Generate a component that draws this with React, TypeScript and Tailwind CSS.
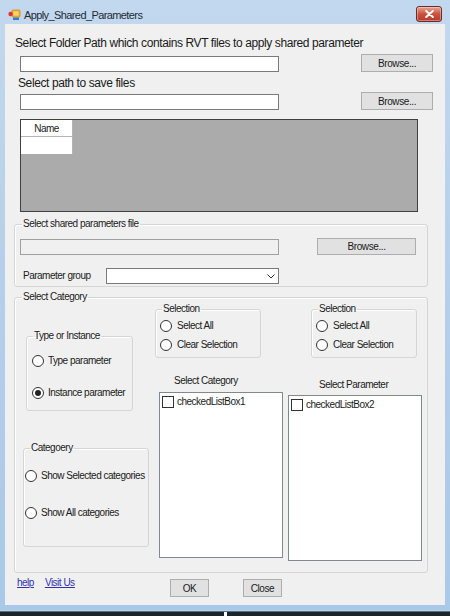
import type { ReactNode } from "react";

const FONT = { fontFamily: '"Liberation Sans", Arial, sans-serif' };

function GroupBox({ title, className, legendClass, children }: { title: string; className: string; legendClass?: string; children?: ReactNode }) {
    return (
        <fieldset className={`border border-[#d5d5d5] rounded-[3px] shadow-[inset_1px_1px_0_#ffffff] ${className}`}>
            <legend className={`px-[1px] text-[10px] leading-[12px] tracking-[-0.5px] text-[#1a1a1a] ${legendClass ?? "ml-[6px]"}`}>{title}</legend>
            {children}
        </fieldset>
    );
}

function Radio({ label, checked, className, gap = "ml-[4px]" }: { label: string; checked?: boolean; className?: string; gap?: string }) {
    return (
        <div className={`flex items-center h-[14px] ${className ?? ""}`}>
            <span className="w-[12px] h-[12px] rounded-full border border-[#333] bg-white flex items-center justify-center shrink-0">
                {checked && <span className="w-[6px] h-[6px] rounded-full bg-[#222]" />}
            </span>
            <span className={`${gap} text-[10px] leading-[12px] tracking-[-0.5px] text-[#1a1a1a] whitespace-nowrap`}>{label}</span>
        </div>
    );
}

function Button({ label, className }: { label: string; className: string }) {
    return (
        <button type="button" className={`bg-[#e1e1e1] border border-[#adadad] text-[10px] tracking-[-0.4px] text-[#1a1a1a] flex items-center justify-center shrink-0 ${className}`}>
            {label}
        </button>
    );
}

function TextBox({ className }: { className: string }) {
    return <div className={`border border-[#7a7a7a] shrink-0 ${className}`} />;
}

function CheckedList({ label, className }: { label: string; className: string }) {
    return (
        <div className={`bg-white border border-[#828790] shrink-0 pt-[3px] pl-[2px] ${className}`}>
            <div className="flex items-center">
                <span className="w-[12px] h-[12px] border border-[#333] bg-white shrink-0" />
                <span className="ml-[3px] text-[10px] leading-[12px] tracking-[-0.5px] text-[#1a1a1a]">{label}</span>
            </div>
        </div>
    );
}

function AppIcon() {
    return (
        <svg width="13" height="12" viewBox="0 0 13 12" className="shrink-0">
            <rect x="4" y="1" width="8" height="7" rx="1" fill="#f2b233" stroke="#c98a1d" strokeWidth="0.8" />
            <rect x="5.5" y="2.5" width="5" height="4" fill="#f8d46a" />
            <circle cx="2.6" cy="5" r="2.2" fill="#d8363a" />
            <rect x="5" y="8.5" width="6" height="2.5" fill="#3b78c9" />
        </svg>
    );
}

export default function App() {
    return (
        <div className="w-[450px] h-[616px] flex flex-col bg-[#1d2b31] overflow-hidden" style={FONT}>
            {/* window */}
            <div className="w-[450px] h-[611px] flex flex-col bg-gradient-to-b from-[#c2d8ee] via-[#b4cfea] to-[#a9c9e8] border-b border-[#b9d3ec]">
                {/* title bar */}
                <div className="h-[24px] flex items-start shrink-0">
                    <div className="ml-[8px] mt-[9px]"><AppIcon /></div>
                    <span className="ml-[3px] mt-[8px] text-[11px] leading-[14px] tracking-[-0.6px] text-[#1e2a36]">Apply_Shared_Parameters</span>
                    <div className="ml-auto mr-[8px] mt-[6px] w-[26px] h-[16px] rounded-[3px] border border-[#6e2a26] bg-gradient-to-b from-[#e8a393] via-[#c9523f] to-[#b73a2a] flex items-center justify-center shadow-[inset_0_0_0_1px_rgba(255,255,255,0.35)]">
                        <svg width="9" height="8" viewBox="0 0 9 8">
                            <path d="M1.2 1 L7.8 7 M7.8 1 L1.2 7" stroke="#ffffff" strokeWidth="2" strokeLinecap="round" />
                        </svg>
                    </div>
                </div>

                {/* client area */}
                <div className="mx-[5px] h-[581px] bg-[#f0f0f0] flex flex-col shrink-0">
                    <div className="mt-[12px] ml-[10px] text-[12px] leading-[14px] tracking-[-0.4px] text-[#1a1a1a]">
                        Select Folder Path which contains RVT files to apply shared parameter
                    </div>
                    <div className="mt-[4px] flex items-end">
                        <TextBox className="ml-[15px] w-[259px] h-[16px] bg-white" />
                        <Button label="Browse..." className="ml-[82px] w-[72px] h-[18px]" />
                    </div>
                    <div className="mt-[4px] ml-[13px] text-[12px] leading-[14px] tracking-[-0.4px] text-[#1a1a1a]">
                        Select path to save files
                    </div>
                    <div className="mt-[2px] flex items-end">
                        <TextBox className="ml-[15px] w-[259px] h-[16px] bg-white" />
                        <Button label="Browse..." className="ml-[82px] w-[72px] h-[18px]" />
                    </div>

                    {/* data grid */}
                    <div className="mt-[9px] ml-[15px] w-[398px] h-[93px] bg-[#ababab] border border-[#404040] shrink-0">
                        <div className="w-[52px] h-[17px] bg-white border-r border-b border-[#b5b5b5] flex items-center justify-center text-[10px] tracking-[-0.5px] text-[#1a1a1a]">Name</div>
                        <div className="w-[52px] h-[17px] bg-white border-r border-[#b5b5b5]" />
                    </div>

                    {/* shared parameters file */}
                    <GroupBox title="Select shared parameters file" className="mt-[6px] ml-[9px] w-[414px] h-[69px] shrink-0" legendClass="ml-[7px]">
                        <div className="mt-[8px] flex items-end">
                            <TextBox className="ml-[5px] w-[259px] h-[16px] bg-[#f0f0f0] border-[#a0a0a0]" />
                            <Button label="Browse..." className="ml-[38px] w-[99px] h-[17px]" />
                        </div>
                        <div className="mt-[13px] flex items-center">
                            <span className="w-[91px] pl-[8px] text-[10px] leading-[12px] tracking-[-0.5px] text-[#1a1a1a]">Parameter group</span>
                            <div className="w-[173px] h-[16px] bg-white border border-[#7a7a7a] flex items-center justify-end pr-[3px]">
                                <svg width="8" height="5" viewBox="0 0 8 5">
                                    <path d="M0.5 0.5 L4 4 L7.5 0.5" fill="none" stroke="#333" strokeWidth="1" />
                                </svg>
                            </div>
                        </div>
                    </GroupBox>

                    {/* select category */}
                    <GroupBox title="Select Category" className="mt-[4px] ml-[9px] w-[414px] h-[282px] shrink-0" legendClass="ml-[7px]">
                        <div className="flex">
                            {/* left column */}
                            <div className="w-[140px] flex flex-col items-start">
                                <GroupBox title="Type or Instance" className="mt-[27px] ml-[11px] w-[107px] h-[81px]">
                                    <Radio label="Type parameter" className="mt-[12px] ml-[5px]" />
                                    <Radio label="Instance parameter" checked className="mt-[18px] ml-[5px]" />
                                </GroupBox>
                                <GroupBox title="Categoery" className="mt-[31px] ml-[8px] w-[126px] h-[105px]">
                                    <Radio label="Show Selected categories" className="mt-[15px] ml-[1px]" />
                                    <Radio label="Show All categories" className="mt-[23px] ml-[1px]" />
                                </GroupBox>
                            </div>

                            {/* middle column */}
                            <div className="w-[133px] flex flex-col items-start">
                                <GroupBox title="Selection" className="w-[106px] h-[55px]">
                                    <Radio label="Select All" className="mt-[4px] ml-[4px]" gap="ml-[5px]" />
                                    <Radio label="Clear Selection" className="mt-[5px] ml-[4px]" gap="ml-[5px]" />
                                </GroupBox>
                                <span className="mt-[17px] ml-[19px] text-[10px] leading-[12px] tracking-[-0.5px] text-[#1a1a1a]">Select Category</span>
                                <CheckedList label="checkedListBox1" className="mt-[5px] ml-[4px] w-[124px] h-[166px]" />
                            </div>

                            {/* right column */}
                            <div className="flex flex-col items-start">
                                <GroupBox title="Selection" className="ml-[23px] w-[106px] h-[55px]">
                                    <Radio label="Select All" className="mt-[4px] ml-[4px]" gap="ml-[5px]" />
                                    <Radio label="Clear Selection" className="mt-[5px] ml-[4px]" gap="ml-[5px]" />
                                </GroupBox>
                                <span className="mt-[21px] ml-[31px] text-[10px] leading-[12px] tracking-[-0.5px] text-[#1a1a1a]">Select Parameter</span>
                                <CheckedList label="checkedListBox2" className="mt-[4px] w-[134px] h-[166px]" />
                            </div>
                        </div>
                    </GroupBox>

                    {/* footer */}
                    <div className="mt-[4px] flex items-start">
                        <div className="w-[165px] pl-[12px] flex gap-[11px] text-[10px] leading-[12px] tracking-[-0.5px] text-[#3030b0] underline">
                            <a href="#">help</a>
                            <a href="#">Visit Us</a>
                        </div>
                        <Button label="OK" className="mt-[2px] w-[39px] h-[18px]" />
                        <Button label="Close" className="mt-[2px] ml-[34px] w-[39px] h-[18px]" />
                    </div>
                </div>
            </div>
            {/* taskbar strip */}
            <div className="h-[5px] border-t border-[#56707a] bg-[#1a262c] flex justify-center">
                <div className="w-[3px] h-[4px] bg-white" />
            </div>
        </div>
    );
}
